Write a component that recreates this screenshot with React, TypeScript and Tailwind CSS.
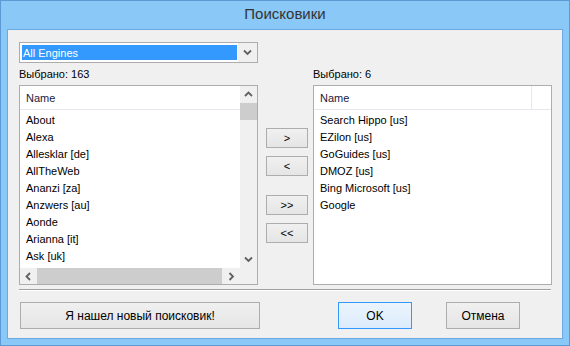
import React from 'react';

const leftItems = ['About', 'Alexa', 'Allesklar [de]', 'AllTheWeb', 'Ananzi [za]', 'Anzwers [au]', 'Aonde', 'Arianna [it]', 'Ask [uk]'];
const rightItems = ['Search Hippo [us]', 'EZilon [us]', 'GoGuides [us]', 'DMOZ [us]', 'Bing Microsoft [us]', 'Google'];

const Chevron: React.FC<{ dir: 'up' | 'down' | 'left' | 'right' }> = ({ dir }) => {
  const pts = {
    up: '1,5 4.5,1.5 8,5',
    down: '1,1.5 4.5,5 8,1.5',
    left: '5,1 1.5,4.5 5,8',
    right: '1.5,1 5,4.5 1.5,8',
  }[dir];
  const horiz = dir === 'up' || dir === 'down';
  return (
    <svg width={horiz ? 9 : 7} height={horiz ? 7 : 9} viewBox={horiz ? '0 0 9 7' : '0 0 7 9'}>
      <polyline points={pts} fill="none" stroke="#606060" strokeWidth="1.8" />
    </svg>
  );
};

const SmallButton: React.FC<{ label: string; className?: string }> = ({ label, className = '' }) => (
  <button className={`h-[20px] w-[42px] border border-[#adadad] bg-gradient-to-b from-[#f0f0f0] to-[#e5e5e5] text-[11px] text-black leading-none ${className}`}>
    {label}
  </button>
);

export default function App() {
  return (
    <div className="w-[570px] h-[346px] bg-[#8ac8f8] border border-[#5c9ad6] flex flex-col px-[6px] pb-[6px] font-['Liberation_Sans',sans-serif]">
      <div className="h-[28px] flex items-center justify-center text-[15px] text-[#333] pb-[1px]">Поисковики</div>
      <div className="flex-1 border border-[#6ba9e2] bg-[#f0f0f0] pl-[11px] flex flex-col text-[11px] text-black">
        {/* dropdown */}
        <div className="mt-[12px] w-[239px] h-[21px] border border-[#acacac] bg-white flex items-stretch">
          <div className="flex-1 m-[2px] mr-0 bg-[#3399ff] text-white flex items-center pl-[1px] pt-[1px]">All Engines</div>
          <div className="w-[19px] flex items-center justify-center bg-[#f0f0f0] ml-[1px]">
            <Chevron dir="down" />
          </div>
        </div>

        {/* labels */}
        <div className="h-[22px] flex items-center pt-[1px]">
          <div className="w-[294px]">Выбрано: 163</div>
          <div>Выбрано: 6</div>
        </div>

        {/* lists */}
        <div className="flex h-[200px]">
          <div className="w-[239px] border border-[#adadad] bg-white flex flex-col">
            <div className="flex flex-1 min-h-0">
              <div className="flex-1 flex flex-col">
                <div className="h-[24px] border-b border-[#e5e8ee] flex items-center pl-[6px] pt-[2px] text-[#1a1a40]">Name</div>
                <div className="pt-[2px]">
                  {leftItems.map(item => (
                    <div key={item} className="h-[17px] flex items-center pl-[6px]">{item}</div>
                  ))}
                </div>
              </div>
              <div className="w-[17px] bg-[#f0f0f0] flex flex-col">
                <div className="h-[17px] flex items-center justify-center"><Chevron dir="up" /></div>
                <div className="h-[17px] bg-[#cdcdcd]" />
                <div className="flex-1" />
                <div className="h-[17px] flex items-center justify-center"><Chevron dir="down" /></div>
              </div>
            </div>
            <div className="h-[16px] flex bg-[#f0f0f0]">
              <div className="w-[17px] flex items-center justify-center"><Chevron dir="left" /></div>
              <div className="w-[185px] bg-[#cdcdcd]" />
              <div className="w-[18px] flex items-center justify-center"><Chevron dir="right" /></div>
              <div className="flex-1" />
            </div>
          </div>

          <div className="ml-[8px] w-[42px] flex flex-col pt-[43px]">
            <SmallButton label=">" />
            <SmallButton label="<" className="mt-[8px]" />
            <SmallButton label=">>" className="mt-[19px]" />
            <SmallButton label="<<" className="mt-[8px]" />
          </div>

          <div className="ml-[5px] w-[239px] border border-[#adadad] bg-white flex flex-col">
            <div className="h-[24px] border-b border-[#e5e8ee] flex">
              <div className="w-[218px] border-r border-[#e5e8ee] flex items-center pl-[6px] pt-[2px] text-[#1a1a40]">Name</div>
            </div>
            <div className="pt-[2px]">
              {rightItems.map(item => (
                <div key={item} className="h-[17px] flex items-center pl-[6px]">{item}</div>
              ))}
            </div>
          </div>
        </div>

        {/* separator */}
        <div className="mt-[4px] w-[532px] h-[2px] border-t border-[#a0a0a0] border-b border-b-white" />

        {/* bottom buttons */}
        <div className="mt-[11px] flex text-[12px]">
          <button className="ml-[1px] w-[240px] h-[27px] border border-[#adadad] bg-gradient-to-b from-[#f0f0f0] to-[#e5e5e5]">
            Я нашел новый поисковик!
          </button>
          <button className="ml-[78px] w-[74px] h-[27px] border border-[#3399ff] bg-gradient-to-b from-[#ecf4fc] to-[#dcecfc]">
            OK
          </button>
          <button className="ml-[34px] w-[74px] h-[27px] border border-[#adadad] bg-gradient-to-b from-[#f0f0f0] to-[#e5e5e5]">
            Отмена
          </button>
        </div>
      </div>
    </div>
  );
}
